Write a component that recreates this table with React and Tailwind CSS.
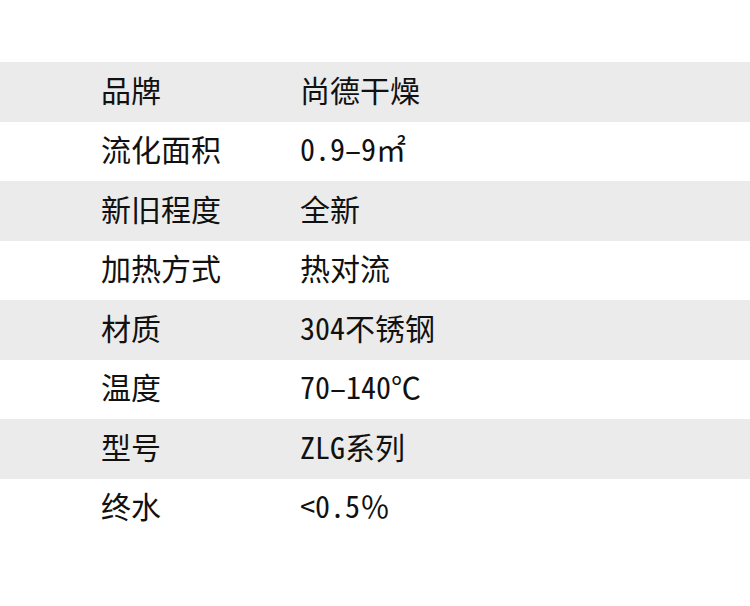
const specs = [
  { label: "品牌", value: "尚德干燥" },
  { label: "流化面积", value: "0.9–9㎡" },
  { label: "新旧程度", value: "全新" },
  { label: "加热方式", value: "热对流" },
  { label: "材质", value: "304不锈钢" },
  { label: "温度", value: "70–140℃" },
  { label: "型号", value: "ZLG系列" },
  { label: "终水", value: "<0.5％" },
];

const App = () => {
  return (
    <div
      className="w-[750px] h-[606px] bg-white pt-[62px] text-[#111] overflow-hidden"
      style={{ fontFamily: '"Noto Sans Mono CJK SC", "Noto Sans CJK SC", sans-serif' }}
    >
      {specs.map((row, index) => (
        <div
          key={row.label}
          className={`flex items-center h-[59.5px] pb-[6px] text-[30px] leading-none ${
            index % 2 === 0 ? "bg-[#ebebeb]" : "bg-white"
          }`}
        >
          <span className="w-[300px] pl-[101px]">{row.label}</span>
          <span>{row.value}</span>
        </div>
      ))}
    </div>
  );
};

export default App;
